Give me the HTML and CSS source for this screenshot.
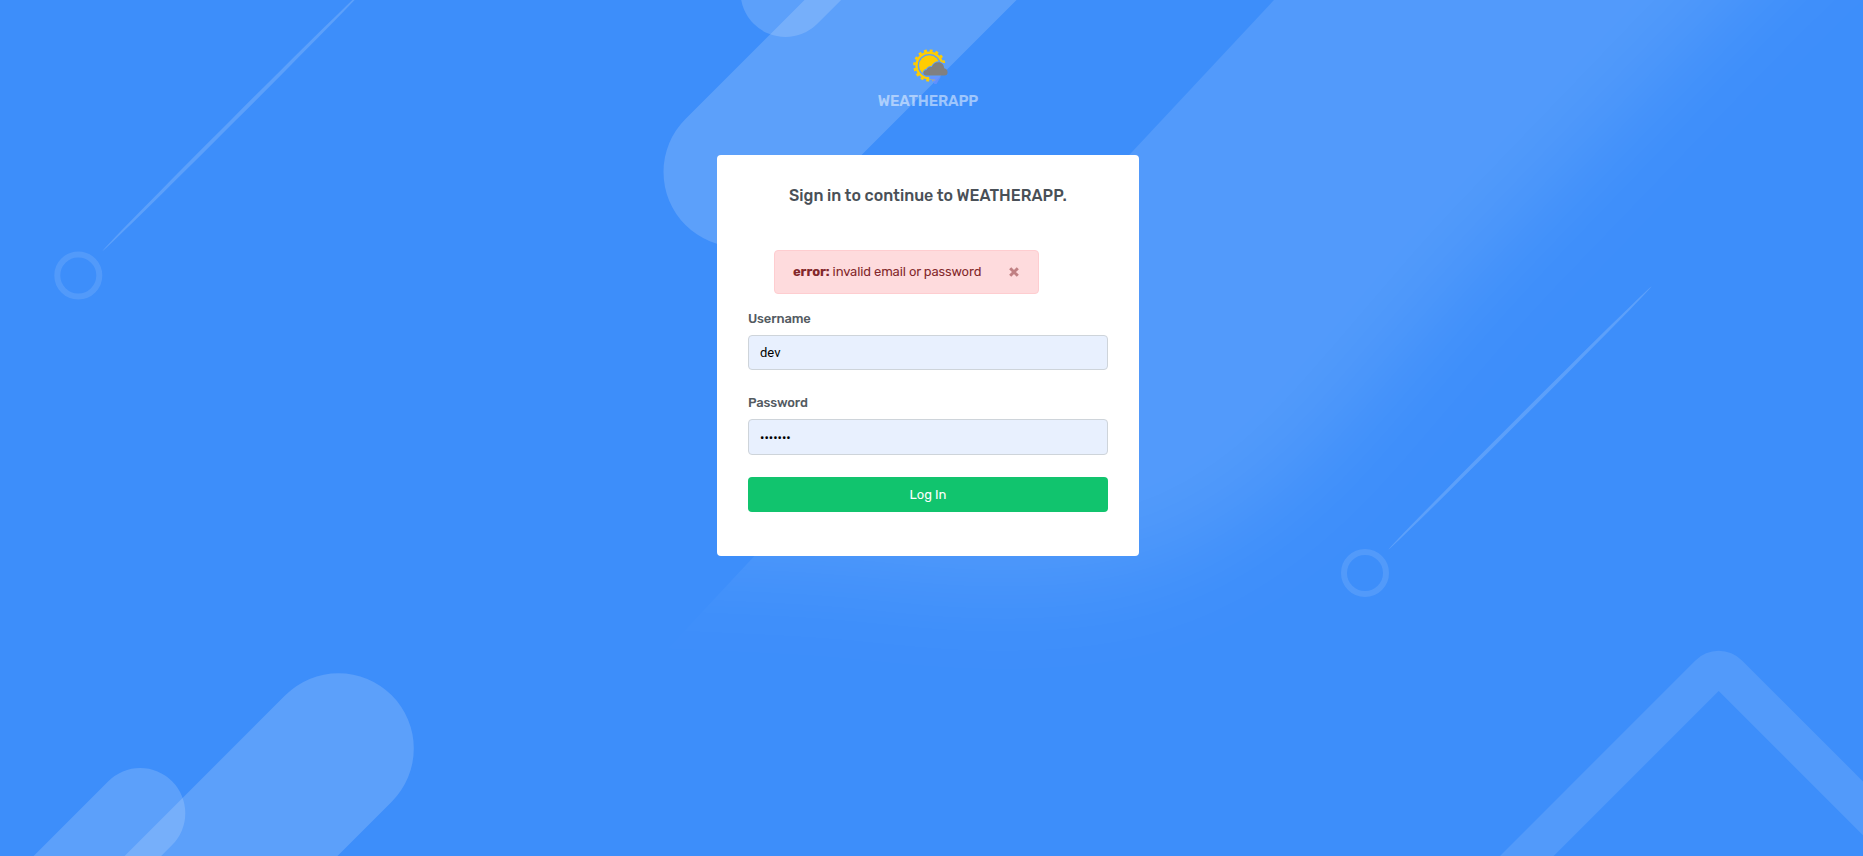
FILE: index.html
```html
<!DOCTYPE html>
<html lang="en">
<head>
<meta charset="utf-8">
<title>Login | WEATHERAPP</title>
<link rel="stylesheet" href="styles.css">
</head>
<body>
<svg class="backdrop" viewBox="0 0 1863 856" preserveAspectRatio="xMidYMid slice" aria-hidden="true">
  <defs>
    <clipPath id="beam-edge"><path d="M1274 0L620 700H1863V0Z"/></clipPath>
    <filter id="soft" x="-20%" y="-20%" width="140%" height="140%"><feGaussianBlur stdDeviation="46"/></filter>
  </defs>
  <g clip-path="url(#beam-edge)">
    <path filter="url(#soft)" fill="#fff" fill-opacity=".11" d="M1400 -200H1940L1735 0L1475 270L1325 445Q1230 545 1130 570Q1010 594 850 568L500 552V300Z"/>
  </g>
  <g fill="none" stroke="#fff" stroke-opacity=".16" stroke-linecap="round">
    <path stroke-width="150" d="M738.500 172L1038.500 -128"/>
    <path stroke-width="90" d="M785.500 -8L885.500 -108"/>
    <path stroke-width="150.600" d="M338.500 748.500L38.500 1048.500"/>
    <path stroke-width="90.200" d="M140.200 813.200L-60 1013.400"/>
  </g>
  <path fill="#fff" fill-opacity=".11" d="M1500 856L1695.400 660.400A33 33 0 0 1 1742 660.400L1863 781.400V835.300L1718.700 691L1553.700 856Z"/>
  <g fill="none" stroke="#fff" stroke-opacity=".11" stroke-width="6">
    <circle cx="78.300" cy="275.500" r="21"/>
    <circle cx="1365" cy="573" r="21"/>
  </g>
  <g fill="#fff" fill-opacity=".16">
    <ellipse rx="186" ry="1.900" transform="translate(234 119.500) rotate(-45)"/>
    <ellipse rx="186" ry="1.900" transform="translate(1520 418) rotate(-45)"/>
  </g>
</svg>

<main class="page">
  <header class="brand">
    <svg class="brand-icon" viewBox="0 0 36 38" aria-hidden="true">
      <defs>
        <mask id="cloud-gap">
          <rect width="36" height="38" fill="#fff"/>
          <path d="M14.500 28.500C11.500 28.500 10.400 26.500 10.500 24.500C10.800 22.500 12.500 21 14.300 20.700C15.500 18.500 17.500 17.700 19.400 18C21 15 23.500 13.200 26.300 13.200C28 13.200 29 13.600 30 14.500L36 16V31H17.200V28.500Z" fill="#000"/>
        </mask>
      </defs>
      <g mask="url(#cloud-gap)">
        <circle cx="17.300" cy="17.500" r="10.300" fill="#ffcc00"/>
        <circle cx="17.300" cy="17.500" r="12.800" fill="none" stroke="#ffcc00" stroke-width="2.400"/>
        <circle cx="17.300" cy="17.500" r="14.800" fill="none" stroke="#ffcc00" stroke-width="2.600" stroke-dasharray="2.906 2.906"/>
      </g>
      <path d="M17.500 28.500H29L24.500 36H22.500Z" fill="#6c90ff" opacity=".75"/>
      <path d="M14.500 27.500C12.600 27.500 11.300 26.300 11.400 24.800C11.500 23.200 12.800 22 14.800 21.700C15.500 19.700 17.500 18.500 19.800 19C21 15.700 23.500 14.200 26.300 14.200C29.700 14.200 32 16.600 32.200 20.300C34.300 20.600 35.600 22.200 35.600 24.300C35.600 26.500 34.300 27.500 32.500 27.500Z" fill="#808080"/>
    </svg>
    <span class="brand-name">WEATHERAPP</span>
  </header>

  <section class="card">
    <h1 class="card-title">Sign in to continue to WEATHERAPP.</h1>
    <div class="alert" role="alert">
      <span class="alert-text"><strong class="alert-label">error:</strong> invalid email or password</span>
      <svg class="alert-close" viewBox="0 0 10 10" aria-hidden="true"><path d="M1.200 1.200L8.800 8.800M8.800 1.200L1.200 8.800"/></svg>
    </div>
    <form class="form">
      <label class="label" for="username">Username</label>
      <input class="input" id="username" type="text" value="dev">
      <label class="label label-password" for="password">Password</label>
      <input class="input input-password" id="password" type="password" value="weather">
      <button class="submit" type="button">Log In</button>
    </form>
  </section>
</main>
</body>
</html>
```
FILE: styles.css
```css
* {
  box-sizing: border-box;
}

body {
  margin: 0;
  height: 856px;
  overflow: hidden;
  background: #3d8efa;
  font-family: Rubik, Roboto, sans-serif;
  font-size: 13px;
  color: #495057;
}

.backdrop {
  position: absolute;
  inset: 0;
  width: 100%;
  height: 100%;
}

.page {
  position: relative;
  display: flex;
  flex-direction: column;
  align-items: center;
  padding: 48px 7px 0 0;
}

.brand {
  display: flex;
  flex-direction: column;
  align-items: center;
  height: 107px;
}

.brand-icon {
  width: 36px;
  height: 38px;
  margin-left: 3px;
}

.brand-name {
  margin-top: 5px;
  font-size: 15px;
  line-height: 20px;
  font-weight: 600;
  letter-spacing: -.15px;
  color: rgba(255, 255, 255, .5);
}

.card {
  width: 422px;
  height: 401px;
  padding: 31px 31px 0;
  border-radius: 4px;
  background: #fff;
}

.card-title {
  margin: 0;
  font-size: 16px;
  line-height: 20px;
  font-weight: 500;
  text-align: center;
}

.alert {
  display: flex;
  align-items: center;
  justify-content: space-between;
  width: 265px;
  height: 44px;
  margin: 44px 0 0 26px;
  padding: 0 19px 0 18px;
  border: 1px solid #fecdd0;
  border-radius: 4px;
  background: #fedbdd;
  color: #83282b;
}

.alert-label {
  font-weight: 700;
}

.alert-text {
  padding-bottom: 1px;
  white-space: nowrap;
  letter-spacing: -.1px;
}

.alert-close {
  width: 10px;
  height: 10px;
  fill: none;
  stroke: #c08083;
  stroke-width: 3;
}

.form {
  display: flex;
  flex-direction: column;
}

.label {
  margin-top: 16px;
  font-weight: 500;
  line-height: 18px;
  letter-spacing: -.15px;
  color: #535a61;
}

.input {
  height: 35px;
  margin-top: 7px;
  padding: 0 11px;
  border: 1px solid #ced4da;
  border-radius: 4px;
  background: #e8f0fe;
  color: #000;
  font: 13px Roboto, sans-serif;
}

.label-password {
  margin-top: 24px;
}

.input-password {
  height: 36px;
}

.submit {
  height: 35px;
  margin-top: 22px;
  border: 0;
  border-radius: 4px;
  background: #11c46e;
  color: #fff;
  font: 400 13px Rubik, Roboto, sans-serif;
}
```
